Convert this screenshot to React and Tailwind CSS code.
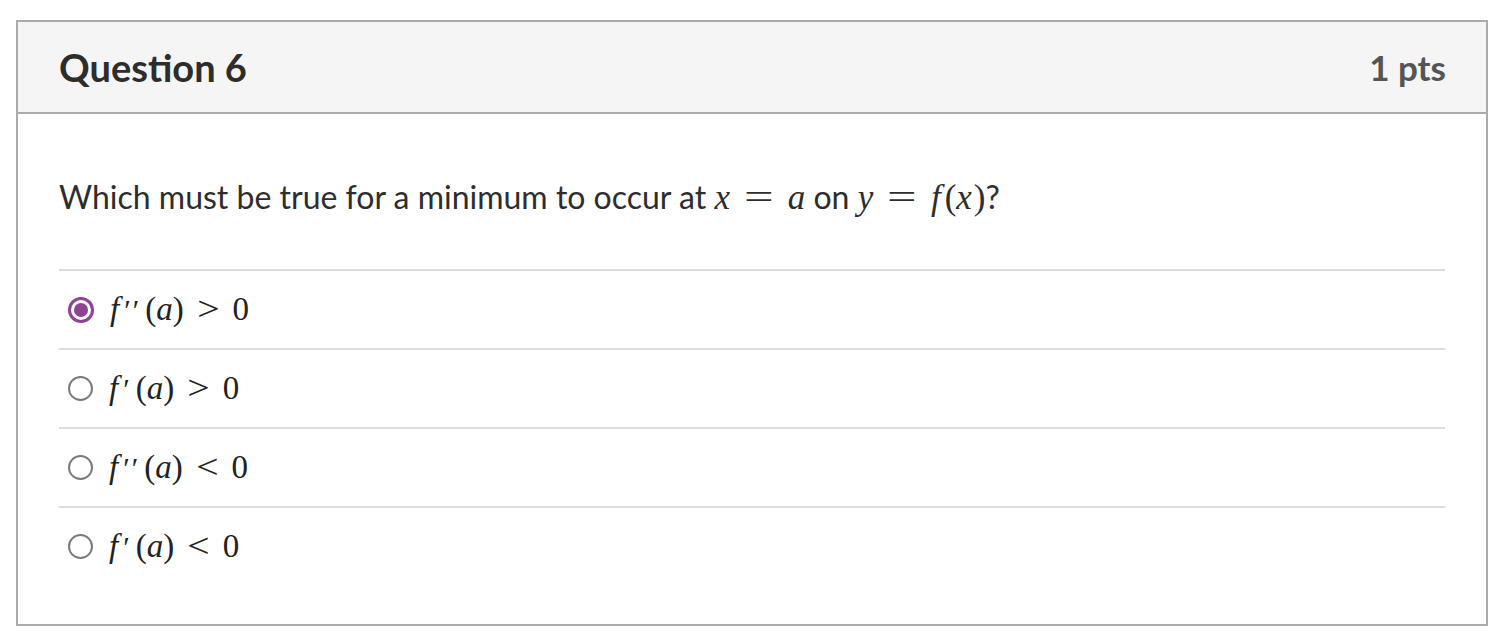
import { useState } from 'react';

const mathFont = { fontFamily: '"Liberation Serif", "DejaVu Serif", serif' };

const V = ({ children }) => <span className="italic">{children}</span>;

// Wide "=" like the TeX glyph
const Eq = () => <span className="inline-block scale-x-[1.5] mx-[19px]">=</span>;

const Expr = ({ primes, op }) => (
  <span style={mathFont} className="text-[33px] text-[#222] flex items-center">
    <V>f</V>
    <span className="ml-[5px] text-[30px] tracking-[2px]">{primes}</span>
    <span className="ml-[4px]">(</span>
    <V>a</V>
    <span>)</span>
    <span className="inline-block scale-x-[1.2] mx-[15px]">{op}</span>
    <span>0</span>
  </span>
);

const options = [
  { id: 1, primes: '\u2032\u2032', op: '>' },
  { id: 2, primes: '\u2032', op: '>' },
  { id: 3, primes: '\u2032\u2032', op: '<' },
  { id: 4, primes: '\u2032', op: '<' },
];

const Radio = ({ checked }) =>
  checked ? (
    <span className="w-[26px] h-[26px] rounded-full border-[3px] border-[#8e4394] flex items-center justify-center">
      <span className="w-[14px] h-[14px] rounded-full bg-[#8e4394]" />
    </span>
  ) : (
    <span className="w-[25px] h-[25px] rounded-full border-2 border-[#7a7a7a]" />
  );

export default function App() {
  const [selected, setSelected] = useState(1);

  return (
    <div className="pt-[20px] pl-[16px] bg-white min-h-[642px]" style={{ fontFamily: 'Lato, "Open Sans", sans-serif' }}>
      <div className="w-[1472px] h-[606px] border-2 border-[#aaaaaa]">
        {/* Header */}
        <div className="h-[92px] bg-[#f5f5f5] border-b-2 border-[#aaaaaa] flex items-center justify-between pl-[41px] pr-[40px]">
          <h2 className="text-[38px] font-bold text-[#2d2d2b]">Question 6</h2>
          <span className="text-[35px] font-bold text-[#555555]">1 pts</span>
        </div>

        {/* Body */}
        <div className="px-[41px] pt-[61px]">
          <p className="text-[32px] leading-[44px] text-[#2d2d2d] mb-[49px]">
            Which must be true for a minimum to occur at{' '}
            <span style={mathFont} className="text-[35px]">
              <V>x</V>
              <Eq />
              <V>a</V>
            </span>{' '}
            on{' '}
            <span style={mathFont} className="text-[35px]">
              <V>y</V>
              <Eq />
              <V>f</V>
              <span className="ml-[4px]">(</span>
              <V>x</V>
              <span className="ml-[2px]">)</span>
            </span>
            ?
          </p>

          <div>
            {options.map((o) => (
              <label
                key={o.id}
                onClick={() => setSelected(o.id)}
                className="h-[79px] border-t-2 border-[#dddddd] flex items-center gap-[16px] pl-[9px] cursor-pointer"
              >
                <Radio checked={selected === o.id} />
                <Expr primes={o.primes} op={o.op} />
              </label>
            ))}
          </div>
        </div>
      </div>
    </div>
  );
}
